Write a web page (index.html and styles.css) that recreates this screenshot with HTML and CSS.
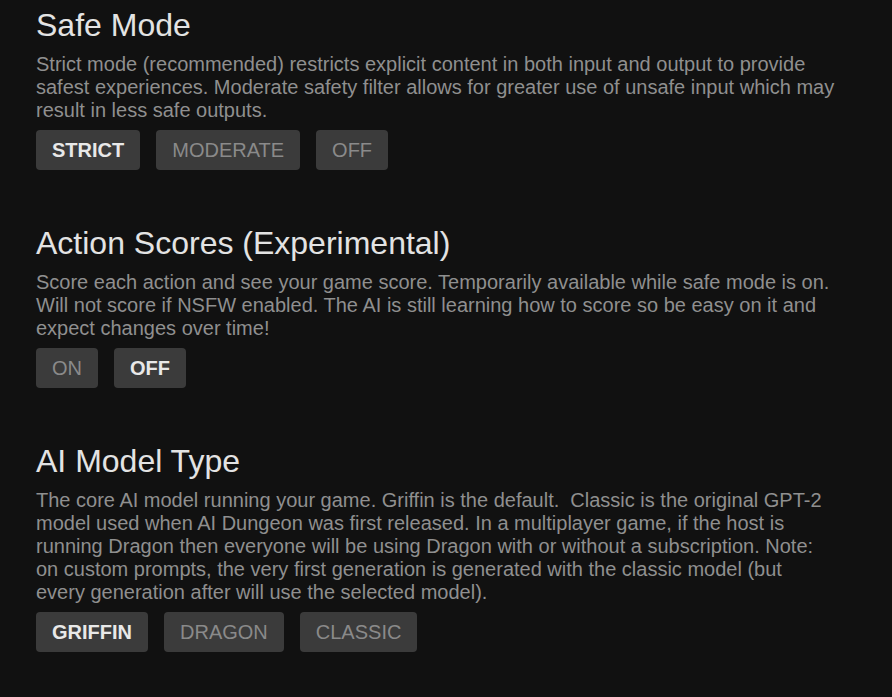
FILE: index.html
```html
<!DOCTYPE html>
<html lang="en">

<head>
    <meta charset="UTF-8">
    <meta name="viewport" content="width=device-width, initial-scale=1.0">
    <link rel="stylesheet" href="styles.css">
    <title>Settings</title>
</head>

<body>

    <div class="settings">

        <section class="setting">
            <h2 class="setting-title">Safe Mode</h2>
            <p class="setting-desc">Strict mode (recommended) restricts explicit content in both input and output to provide safest experiences. Moderate safety filter allows for greater use of unsafe input which may result in less safe outputs.</p>
            <div class="options">
                <button class="option selected">STRICT</button>
                <button class="option">MODERATE</button>
                <button class="option">OFF</button>
            </div>
        </section>

        <section class="setting">
            <h2 class="setting-title">Action Scores (Experimental)</h2>
            <p class="setting-desc">Score each action and see your game score. Temporarily available while safe mode is on. Will not score if NSFW enabled. The AI is still learning how to score so be easy on it and expect changes over time!</p>
            <div class="options">
                <button class="option">ON</button>
                <button class="option selected">OFF</button>
            </div>
        </section>

        <section class="setting">
            <h2 class="setting-title">AI Model Type</h2>
            <p class="setting-desc">The core AI model running your game. Griffin is the default.&nbsp; Classic is the original GPT-2 model used when AI Dungeon was first released. In a multiplayer game, if the host is running Dragon then everyone will be using Dragon with or without a subscription. Note: on custom prompts, the very first generation is generated with the classic model (but every generation after will use the selected model).</p>
            <div class="options">
                <button class="option selected">GRIFFIN</button>
                <button class="option">DRAGON</button>
                <button class="option">CLASSIC</button>
            </div>
        </section>

    </div>

</body>

</html>
```

FILE: styles.css
```css
* {
    box-sizing: border-box;
}

html,
body {
    margin: 0;
    background-color: #111111;
    font-family: "Liberation Sans", Arial, Helvetica, sans-serif;
}

.settings {
    width: 835px;
    padding: 7px 0 0 36px;
    display: flex;
    flex-direction: column;
    gap: 55px;
}

.setting-title {
    margin: 0 0 9px 0;
    font-size: 32px;
    font-weight: normal;
    color: #e3e3e3;
}

.setting-desc {
    margin: 0 0 8px 0;
    font-size: 20px;
    color: #8f8f8f;
}

.options {
    display: flex;
    gap: 16px;
}

.option {
    height: 40px;
    padding: 0 16px;
    border: none;
    border-radius: 4px;
    background-color: #3b3b3b;
    color: #8a8a8a;
    font-family: inherit;
    font-size: 20px;
    cursor: pointer;
}

.option.selected {
    color: #e8e8e8;
    font-weight: bold;
}
```
